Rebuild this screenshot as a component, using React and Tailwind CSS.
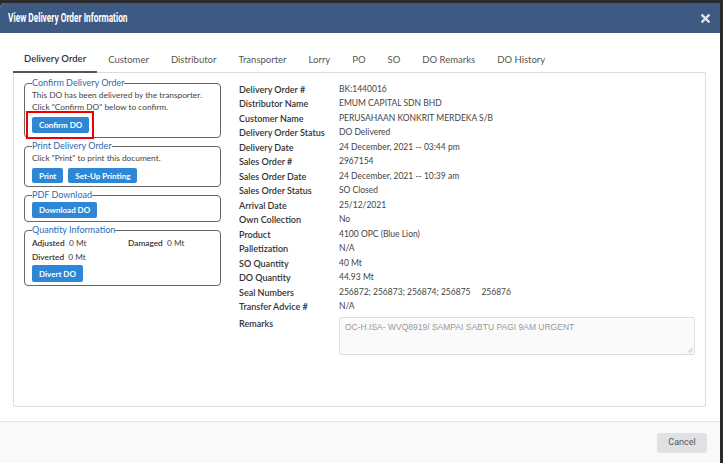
import React from "react";

const rows = [
  ["Delivery Order #", "BK:1440016"],
  ["Distributor Name", "EMUM CAPITAL SDN BHD"],
  ["Customer Name", "PERUSAHAAN KONKRIT MERDEKA S/B"],
  ["Delivery Order Status", "DO Delivered"],
  ["Delivery Date", "24 December, 2021 -- 03:44 pm"],
  ["Sales Order #", "2967154"],
  ["Sales Order Date", "24 December, 2021 -- 10:39 am"],
  ["Sales Order Status", "SO Closed"],
  ["Arrival Date", "25/12/2021"],
  ["Own Collection", "No"],
  ["Product", "4100 OPC (Blue Lion)"],
  ["Palletization", "N/A"],
  ["SO Quantity", "40 Mt"],
  ["DO Quantity", "44.93 Mt"],
  ["Seal Numbers", "256872; 256873; 256874; 256875\u00a0\u00a0\u00a0\u00a0\u00a0256876"],
  ["Transfer Advice #", "N/A"],
];

const tabs = ["Delivery Order", "Customer", "Distributor", "Transporter", "Lorry", "PO", "SO", "DO Remarks", "DO History"];

function Btn({ children, h = "h-[16px]" }) {
  return (
    <button className={h + " block rounded-[2px] bg-[#2e87d5] px-[7px] text-[8px] font-bold leading-none text-white"}>
      {children}
    </button>
  );
}

function Box({ title, children, cls = "" }) {
  return (
    <fieldset className={"rounded-[4px] border border-[#666] px-[7px] " + cls}>
      <legend className="px-0 text-[9px] leading-[12px] text-[#2a6cb3]">{title}</legend>
      {children}
    </fieldset>
  );
}

export default function App() {
  return (
    <div className="h-[463px] w-[723px] bg-[#2a2a2a] pt-[3px] pr-[3px]" style={{ fontFamily: "Lato, 'Noto Sans', sans-serif" }}>
      <div className="flex h-[460px] w-[720px] flex-col overflow-hidden rounded-tl-[5px] bg-white">
        <div className="flex h-[30px] shrink-0 items-center justify-between bg-[#3d5b82] pl-[8px] pr-[10px]">
          <span
            className="inline-block origin-left scale-x-[0.64] whitespace-nowrap text-[13px] font-bold text-white"
            style={{ fontFamily: "Roboto, sans-serif" }}
          >
            View Delivery Order Information
          </span>
          <svg width="9" height="9" viewBox="0 0 10 10">
            <path d="M1.5 1.5 L8.5 8.5 M8.5 1.5 L1.5 8.5" stroke="#dfe3e8" strokeWidth="2.6" strokeLinecap="square" />
          </svg>
        </div>

        <div className="flex flex-1 flex-col pl-[13px] pr-[14px] pt-[14px] pb-[14px]">
          <div className="flex h-[26px] shrink-0 items-stretch border-b border-[#ddd]">
            {tabs.map((t, i) => (
              <div
                key={t}
                className={
                  "-mb-px flex items-center whitespace-nowrap px-[11px] text-[9.5px] " +
                  (i === 0 ? "border-b-2 border-[#555] font-semibold text-[#333]" : "text-[#555]")
                }
              >
                {t}
              </div>
            ))}
          </div>
          <div className="flex flex-1 gap-[18px] rounded-b-[3px] border border-t-0 border-[#ddd] pl-[10px] pt-[4px]">
            <div className="flex w-[197px] shrink-0 flex-col gap-[2px]">
              <Box title="Confirm Delivery Order" cls="pb-[4px]">
                <div className="text-[8.3px] leading-[12px] text-[#444]">
                  This DO has been delivered by the transporter.
                  <br />
                  Click "Confirm DO" below to confirm.
                </div>
                <div className="relative mt-[4px] flex w-fit">
                  <Btn>Confirm DO</Btn>
                  <div className="pointer-events-none absolute -left-[6px] -top-[6px] h-[28px] w-[68px] border-2 border-[#e00]" />
                </div>
              </Box>
              <Box title="Print Delivery Order" cls="pb-[3px]">
                <div className="text-[8.3px] leading-[12px] text-[#444]">Click "Print" to print this document.</div>
                <div className="mt-[4px] flex gap-[5px]">
                  <Btn h="h-[15px]">Print</Btn>
                  <Btn h="h-[15px]">Set-Up Printing</Btn>
                </div>
              </Box>
              <Box title="PDF Download" cls="pb-[3px]">
                <div className="mt-[1px] flex">
                  <Btn>Download DO</Btn>
                </div>
              </Box>
              <Box title="Quantity Information" cls="pb-[3px]">
                <div className="grid grid-cols-[96px_1fr] text-[8.3px] leading-[14px] text-[#444]">
                  <div>
                    <span className="font-semibold text-[#333]">Adjusted</span>&nbsp;&nbsp;0 Mt
                  </div>
                  <div>
                    <span className="font-semibold text-[#333]">Damaged</span>&nbsp;&nbsp;0 Mt
                  </div>
                  <div>
                    <span className="font-semibold text-[#333]">Diverted</span>&nbsp;&nbsp;0 Mt
                  </div>
                </div>
                <div className="mt-[1px] flex">
                  <Btn h="h-[17px]">Divert DO</Btn>
                </div>
              </Box>
            </div>

            <div className="flex flex-1 flex-col pt-[5px] pr-[10px]">
              {rows.map(([k, v]) => (
                <div key={k} className="flex h-[14.5px] items-center">
                  <div className="w-[100px] shrink-0 text-[9px] font-semibold text-[#333]">{k}</div>
                  <div className="whitespace-nowrap text-[8.5px] text-[#444]">{v}</div>
                </div>
              ))}
              <div className="mt-[3px] flex">
                <div className="w-[100px] shrink-0 text-[9px] font-semibold text-[#333]">Remarks</div>
                <div
                  className="relative h-[38px] flex-1 rounded-[2px] border border-[#ddd] bg-[#fafafa] px-[5px] pt-[3px] text-[8.5px] text-[#999]"
                  style={{ fontFamily: "'Liberation Sans', Arial, sans-serif" }}
                >
                  OC-H.ISA- WVQ8919/ SAMPAI SABTU PAGI 9AM URGENT
                  <svg className="absolute bottom-[1px] right-[1px]" width="6" height="6" viewBox="0 0 6 6">
                    <path d="M5.5 1 L1 5.5 M5.5 3.5 L3.5 5.5" stroke="#999" strokeWidth="0.7" />
                  </svg>
                </div>
              </div>
            </div>
          </div>
        </div>

        <div className="flex h-[42px] shrink-0 items-center justify-end border-t border-[#e3e3e3] bg-[#f8f9fa] pr-[13px]">
          <button className="h-[20px] w-[50px] rounded-[3px] bg-[#e0e1e3] text-[9px] text-[#555]" style={{ fontFamily: "Roboto, sans-serif" }}>
            Cancel
          </button>
        </div>
      </div>
    </div>
  );
}
